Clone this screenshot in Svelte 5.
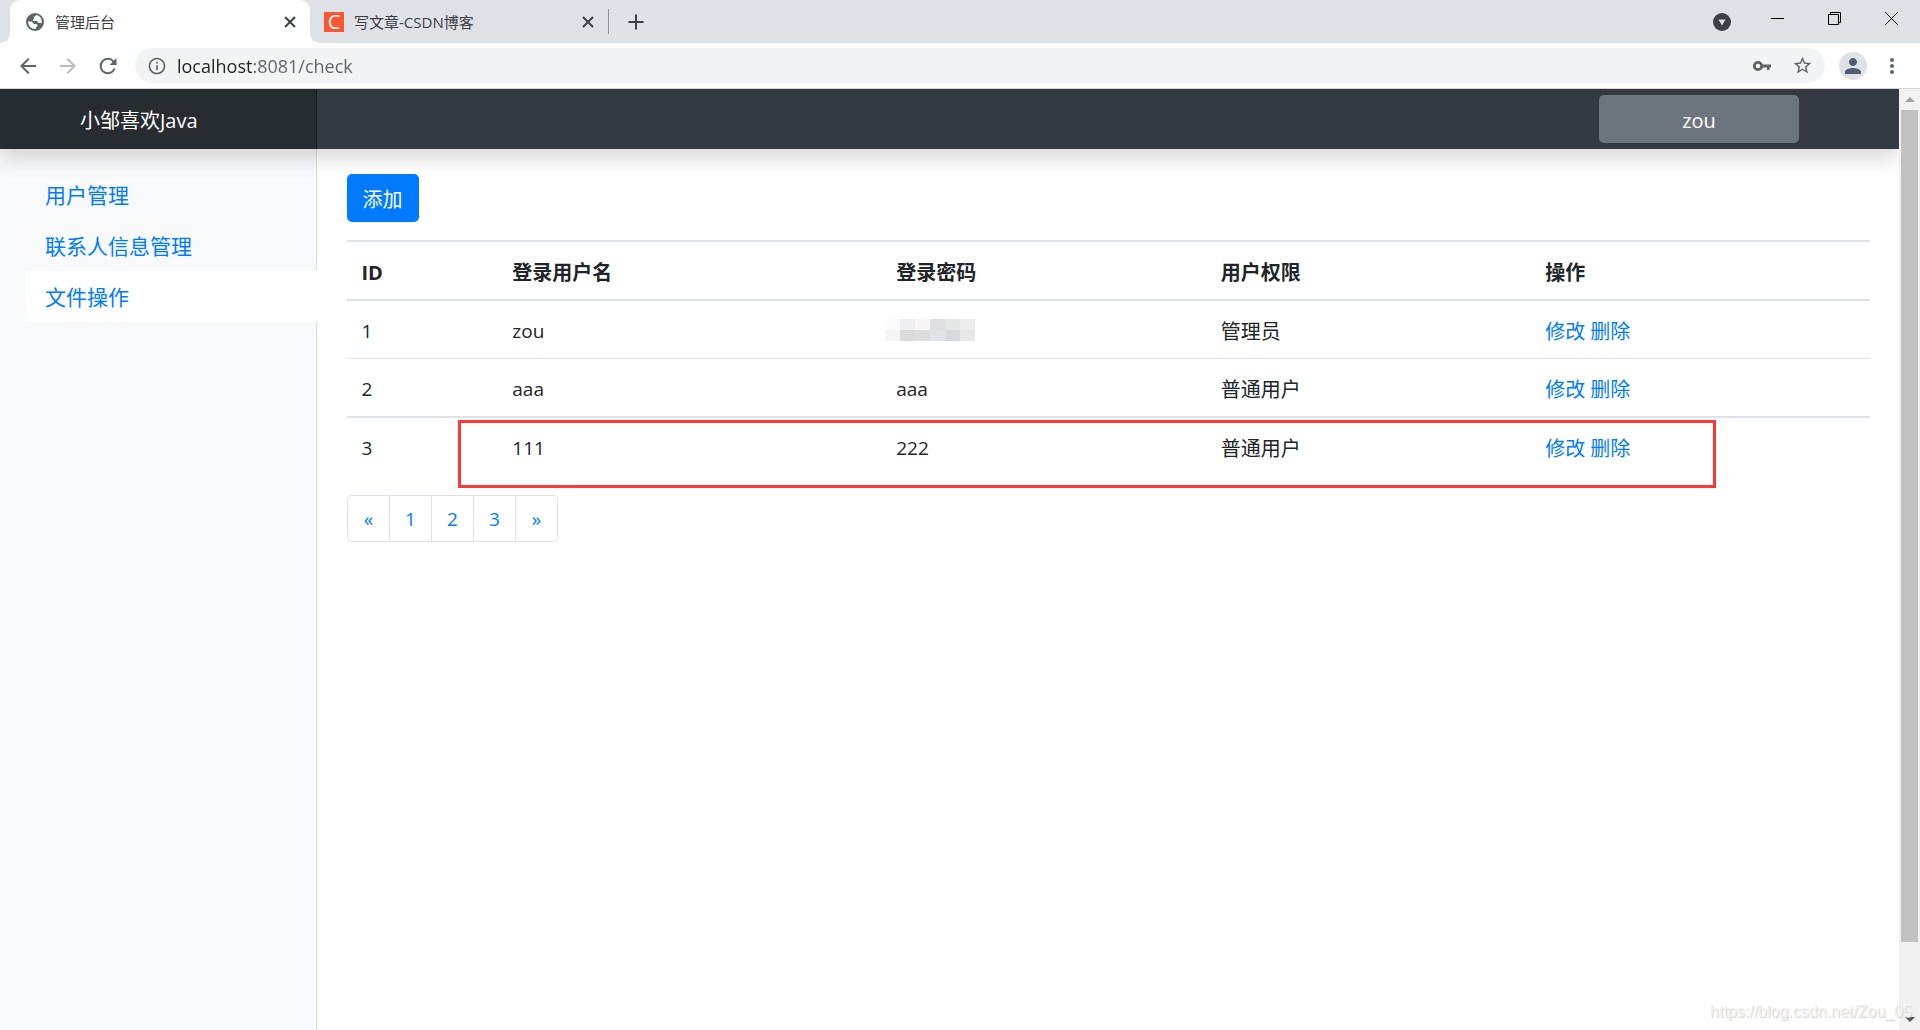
<script>
	// ---- data ----
	const menu = [
		{ id: 'users', label: '用户管理' },
		{ id: 'contacts', label: '联系人信息管理' },
		{ id: 'files', label: '文件操作' }
	];
	const columns = ['ID', '登录用户名', '登录密码', '用户权限', '操作'];
	const users = [
		{ id: 1, name: 'zou', password: null, role: '管理员' },
		{ id: 2, name: 'aaa', password: 'aaa', role: '普通用户' },
		{ id: 3, name: '111', password: '222', role: '普通用户' }
	];
	const pages = ['«', '1', '2', '3', '»'];
	const mosaic = [
		'#fbfbfa', '#eeeff1', '#f8f7f6', '#dfdfe1', '#e5e6e8', '#ededee',
		'#f6f5f5', '#dadadb', '#dddddd', '#e2e3e6', '#d8d9dc', '#e7e7e8'
	];

	let active = $state('files');
	let url = $state('localhost:8081/check');
</script>

{#snippet icon(d, size)}
	<svg width={size} height={size} viewBox="0 0 24 24" fill="currentColor" aria-hidden="true"><path {d} /></svg>
{/snippet}

{#snippet cross()}
	<svg width="12" height="12" viewBox="0 0 12 12" fill="none" stroke="currentColor" stroke-width="2" aria-hidden="true">
		<path d="M1 1l10 10M11 1L1 11" />
	</svg>
{/snippet}

<div class="window">
	<div class="tabstrip">
		<div class="tab current">
			<span class="favicon globe">
				<svg width="20" height="20" viewBox="0 0 20 20" aria-hidden="true">
					<circle cx="10" cy="10" r="9" fill="currentColor" />
					<path d="M11.500 3c-.500 1-2 1-2.500 2s.500 1.500-.500 2.500-1 1.500 0 1.500h3c1.500 0 1 2 2 2h3.400A7 7 0 0 0 11.500 3zM3 9.500A7 7 0 0 0 10.500 17l.500-1.500c.300-1 1.500-.800 1.500-2s-1-1.500-2-1.500H9c-1 0-1-2.500-2.500-2.500z" fill="#fff" />
				</svg>
			</span>
			<span class="title">管理后台</span>
			<button class="close" aria-label="Close tab">{@render cross()}</button>
		</div>
		<div class="tab">
			<span class="favicon csdn">C</span>
			<span class="title">写文章-CSDN博客</span>
			<button class="close" aria-label="Close tab">{@render cross()}</button>
		</div>
		<button class="newtab" aria-label="New tab">
			<svg width="16" height="16" viewBox="0 0 16 16" stroke="currentColor" stroke-width="2" aria-hidden="true"><path d="M8 0.500v15M0.500 8h15" /></svg>
		</button>
		<div class="controls">
			<button class="search" aria-label="Search tabs">
				<svg width="18" height="18" viewBox="0 0 18 18" aria-hidden="true"><circle cx="9" cy="9" r="9" fill="#3c4043" /><path d="M5.500 6.500h7L9 12.500z" fill="#dee1e6" /></svg>
			</button>
			<button aria-label="Minimize">
				<svg width="13" height="13" viewBox="0 0 13 13" aria-hidden="true"><path d="M0 6h13v1H0z" /></svg>
			</button>
			<button aria-label="Restore">
				<svg width="13" height="13" viewBox="0 0 13 13" fill="none" stroke="#000" aria-hidden="true"><path d="M0.500 2.500h10v10h-10zM2.500 2.500v-2h10v10h-2" /></svg>
			</button>
			<button aria-label="Close">
				<svg width="13" height="13" viewBox="0 0 13 13" stroke="#000" aria-hidden="true"><path d="M0 0l13 13M13 0L0 13" /></svg>
			</button>
		</div>
	</div>

	<div class="toolbar">
		<button class="nav" aria-label="Back">{@render icon('M20 11H7.830l5.590-5.590L12 4l-8 8 8 8 1.410-1.410L7.830 13H20v-2z', 24)}</button>
		<button class="nav off" aria-label="Forward">{@render icon('M12 4l-1.410 1.410L16.170 11H4v2h12.170l-5.580 5.590L12 20l8-8z', 24)}</button>
		<button class="nav" aria-label="Reload">
			<svg width="24" height="24" viewBox="0 0 24 24" aria-hidden="true">
				<path d="M18.600 14.500A7.200 7.200 0 1 1 17.500 7.500" fill="none" stroke="currentColor" stroke-width="2" />
				<path d="M20.500 4v7h-7z" fill="currentColor" />
			</svg>
		</button>
		<div class="omnibox">
			{@render icon('M11 17h2v-6h-2v6zm1-15C6.480 2 2 6.480 2 12s4.480 10 10 10 10-4.480 10-10S17.520 2 12 2zm0 18c-4.410 0-8-3.590-8-8s3.590-8 8-8 8 3.590 8 8-3.590 8-8 8zM11 9h2V7h-2v2z', 20)}
			<input type="text" aria-label="Address" bind:value={url} />
			<button aria-label="Passwords">
				<svg width="20" height="20" viewBox="0 0 20 20" aria-hidden="true">
					<circle cx="6" cy="10" r="3.700" fill="none" stroke="currentColor" stroke-width="2.800" />
					<path d="M9 8.500h10v3h-1.500V14H15v-2.500H9z" fill="currentColor" />
				</svg>
			</button>
			<button aria-label="Bookmark">{@render icon('M22 9.240l-7.190-.620L12 2 9.190 8.630 2 9.240l5.460 4.730L5.820 21 12 17.270 18.180 21l-1.630-7.030L22 9.240zM12 15.400l-3.760 2.270 1-4.280-3.320-2.880 4.380-.380L12 6.100l1.710 4.040 4.380.380-3.320 2.880 1 4.280L12 15.400z', 21)}</button>
		</div>
		<button class="avatar" aria-label="Profile">{@render icon('M12 12c2.210 0 4-1.790 4-4s-1.790-4-4-4-4 1.790-4 4 1.790 4 4 4zm0 2c-2.670 0-8 1.340-8 4v2h16v-2c0-2.660-5.330-4-8-4z', 24)}</button>
		<button class="more" aria-label="Menu">{@render icon('M12 8c1.100 0 2-.900 2-2s-.900-2-2-2-2 .900-2 2 .900 2 2 2zm0 2c-1.100 0-2 .900-2 2s.900 2 2 2 2-.900 2-2-.900-2-2-2zm0 6c-1.100 0-2 .900-2 2s.900 2 2 2 2-.900 2-2-.900-2-2-2z', 24)}</button>
	</div>

	<div class="viewport">
		<div class="page">
			<header>
				<a class="brand" href="#home">小邹喜欢Java</a>
				<button class="user">zou</button>
			</header>
			<nav>
				{#each menu as item (item.id)}
					<a href="#{item.id}" class:active={active === item.id} onclick={() => (active = item.id)}>{item.label}</a>
				{/each}
			</nav>
			<main>
				<button class="add">添加</button>
				<div class="list">
					<table>
						<thead>
							<tr>
								{#each columns as column}
									<th>{column}</th>
								{/each}
							</tr>
						</thead>
						<tbody>
							{#each users as user (user.id)}
								<tr>
									<td class="latin">{user.id}</td>
									<td class="latin">{user.name}</td>
									<td class="latin">
										{#if user.password}
											{user.password}
										{:else}
											<span class="mosaic">
												{#each mosaic as color}
													<i style="background: {color}"></i>
												{/each}
											</span>
										{/if}
									</td>
									<td>{user.role}</td>
									<td class="actions"><a href="#edit">修改</a><a href="#delete">删除</a></td>
								</tr>
							{/each}
						</tbody>
					</table>
					<div class="marker"></div>
				</div>
				<div class="pagination">
					{#each pages as page}
						<a href="#page">{page}</a>
					{/each}
				</div>
			</main>
		</div>
		<div class="scrollbar">
			<svg class="up" width="10" height="5" viewBox="0 0 10 5" aria-hidden="true"><path d="M0 5l5-5 5 5z" /></svg>
			<div class="track"><div class="thumb"></div></div>
			<svg class="down" width="10" height="5" viewBox="0 0 10 5" aria-hidden="true"><path d="M0 0l5 5 5-5z" /></svg>
		</div>
		<div class="watermark">https://blog.csdn.net/Zou_05</div>
	</div>
</div>

<style>
	:global(body) {
		margin: 0;
	}
	.window {
		display: flex;
		flex-direction: column;
		height: 100vh;
		overflow: hidden;
		background: #fff;
		color: #212529;
		font-family: 'Open Sans', 'Noto Sans CJK SC', sans-serif;
		font-size: 20px;
		line-height: 27px;
	}
	button {
		display: flex;
		align-items: center;
		justify-content: center;
		padding: 0;
		border: 0;
		background: none;
		color: inherit;
		font: inherit;
	}
	a {
		color: #007bff;
		text-decoration: none;
	}
	svg {
		display: block;
		flex: none;
	}

	/* browser tabs */
	.tabstrip {
		display: flex;
		align-items: center;
		height: 43px;
		padding-left: 10px;
		background: #dee1e6;
		color: #3c4043;
	}
	.tab {
		position: relative;
		display: flex;
		align-items: center;
		gap: 10px;
		box-sizing: border-box;
		width: 298px;
		height: 43px;
		padding: 0 14px;
		font-size: 15px;
	}
	.tab.current {
		width: 300px;
		padding-left: 15px;
		background: #fff;
		border-radius: 10px 10px 0 0;
	}
	.tab.current::before,
	.tab.current::after {
		content: '';
		position: absolute;
		bottom: 0;
		width: 10px;
		height: 10px;
	}
	.tab.current::before {
		right: 100%;
		background: radial-gradient(circle at 0 0, transparent 10px, #fff 10px);
	}
	.tab.current::after {
		left: 100%;
		background: radial-gradient(circle at 100% 0, transparent 10px, #fff 10px);
	}
	.favicon {
		width: 20px;
		height: 20px;
	}
	.globe {
		color: #5f6368;
	}
	.csdn {
		background: #fc5531;
		color: #fff;
		font-size: 20px;
		line-height: 20px;
		text-align: center;
	}
	.title {
		flex: 1;
		padding-top: 2px;
	}
	.newtab {
		height: 25px;
		padding-left: 19px;
		border-left: 1px solid #909499;
	}
	.controls {
		display: flex;
		align-self: flex-start;
		margin-left: auto;
	}
	.controls button {
		width: 57px;
		height: 37px;
	}
	.controls .search {
		width: 28px;
		height: 43px;
		margin-right: 13px;
	}

	/* address bar */
	.toolbar {
		display: flex;
		align-items: center;
		height: 45px;
		padding: 0 16px 0 8px;
		border-bottom: 1px solid #d3d5d8;
		color: #5f6368;
	}
	.nav {
		width: 40px;
		height: 40px;
	}
	.off {
		color: #babcbe;
	}
	.omnibox {
		flex: 1;
		display: flex;
		align-items: center;
		height: 35px;
		margin: 0 14px 0 7px;
		padding: 0 3px 0 12px;
		border-radius: 18px;
		background: #f1f3f4;
	}
	.omnibox input {
		flex: 1;
		height: 35px;
		margin-left: 10px;
		padding: 0;
		border: 0;
		outline: 0;
		background: linear-gradient(90deg, #202124 75px, #5f6368 75px) text;
		color: transparent;
		caret-color: #202124;
		font: inherit;
		font-size: 18px;
	}
	.omnibox button {
		width: 40px;
		height: 35px;
	}
	.avatar {
		width: 28px;
		height: 28px;
		margin-right: 13px;
		border-radius: 50%;
		background: #dee1e6;
		color: #4f5b70;
	}

	/* page */
	.viewport {
		position: relative;
		flex: 1;
		display: flex;
		min-height: 0;
	}
	.page {
		flex: 1;
		display: grid;
		grid-template-columns: 1fr 5fr;
		grid-template-rows: 60px 1fr;
		overflow: hidden;
	}
	header {
		position: relative;
		z-index: 1;
		grid-column: 1 / -1;
		display: grid;
		grid-template-columns: 1fr 5fr;
		align-items: center;
		background: #353941;
		box-shadow: 0 10px 20px rgba(0, 0, 0, 0.15);
		color: #fff;
	}
	.brand {
		box-sizing: border-box;
		height: 60px;
		padding-left: 80px;
		background: #272c30;
		box-shadow: inset -1px 0 0 #1d2124;
		color: #fff;
		line-height: 64px;
	}
	.user {
		justify-self: end;
		width: 200px;
		height: 48px;
		margin-right: 100px;
		padding-top: 2px;
		border-radius: 5px;
		background: #6c757d;
		font-weight: 500;
	}
	nav {
		display: flex;
		flex-direction: column;
		padding: 20px 0 0 25px;
		background: #f8f9fa;
		box-shadow: inset -1px 0 0 #dcdddd;
	}
	nav a {
		padding: 13px 20px 11px;
		font-size: 21px;
	}
	nav a.active {
		background: #fff;
	}
	main {
		padding: 25px 29px 0 30px;
	}
	.add {
		height: 48px;
		padding: 2px 16px 0;
		border-radius: 5px;
		background: #007bff;
		color: #fff;
	}
	.list {
		position: relative;
		margin: 18px 0 20px;
	}
	table {
		width: 100%;
		table-layout: fixed;
		border-spacing: 0;
	}
	th,
	td {
		padding: 17px 15px 13px;
		border-top: 2px solid #dee2e6;
		text-align: left;
	}
	tbody tr:nth-child(2) td {
		border-top-width: 1px;
	}
	th {
		box-sizing: border-box;
	}
	th:nth-child(1) {
		width: 9.9%;
	}
	th:nth-child(2) {
		width: 25.2%;
	}
	th:nth-child(3),
	th:nth-child(4) {
		width: 21.3%;
	}
	.latin {
		font-size: 19px;
	}
	.mosaic {
		display: grid;
		grid-template-columns: repeat(6, 15px);
		grid-auto-rows: 11px;
		margin: -4px 0 0 -11px;
	}
	.actions a + a {
		margin-left: 5px;
	}
	.marker {
		position: absolute;
		top: 180px;
		left: 111px;
		right: 154px;
		height: 62px;
		border: 3px solid #fd3839;
		pointer-events: none;
	}
	.pagination {
		display: flex;
	}
	.pagination a {
		width: 40px;
		padding: 2px 0 0 1px;
		border: 1px solid #dee2e6;
		border-left-width: 0;
		font-size: 19px;
		line-height: 43px;
		text-align: center;
	}
	.pagination a:first-child {
		border-left-width: 1px;
		border-radius: 5px 0 0 5px;
	}
	.pagination a:last-child {
		border-radius: 0 5px 5px 0;
	}

	/* scrollbar */
	.scrollbar {
		display: flex;
		flex-direction: column;
		align-items: center;
		justify-content: space-between;
		width: 21px;
		background: #f1f1f1;
	}
	.up {
		margin: 8px 0;
		fill: #a3a3a3;
	}
	.down {
		margin: 8px 0;
		fill: #505050;
	}
	.track {
		flex: 1;
		width: 17px;
	}
	.thumb {
		height: 92.6%;
		background: #c1c1c1;
	}
	.watermark {
		position: absolute;
		right: 8px;
		bottom: 6px;
		color: #f2f2f2;
		font-family: 'Liberation Sans', sans-serif;
		font-size: 16px;
		line-height: 24px;
		text-shadow: 1px 1px 1px #d0d0d0;
	}
</style>
